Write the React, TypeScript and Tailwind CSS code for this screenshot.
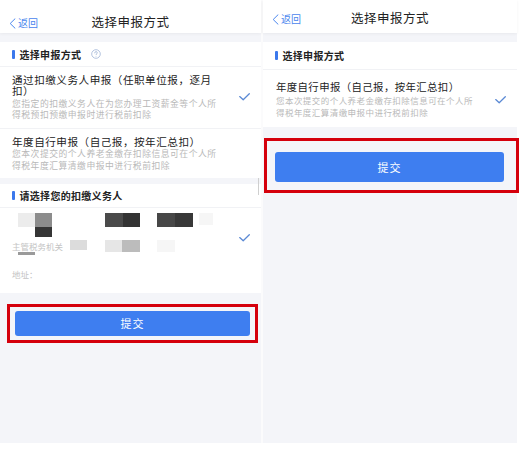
import React from 'react';

const FONT = { fontFamily: '"Noto Sans CJK SC", "Noto Sans", sans-serif' };

function Check() {
  return (
    <svg width="11" height="8" viewBox="0 0 11 8" fill="none">
      <polyline points="0.7,3.6 4.2,6.8 10.3,0.8" stroke="#5a89d4" strokeWidth="1.3" strokeLinecap="round" strokeLinejoin="round" />
    </svg>
  );
}

function HelpIcon() {
  return (
    <svg width="10" height="10" viewBox="0 0 10 10" fill="none">
      <circle cx="5" cy="5" r="4.3" stroke="#9fb4d6" strokeWidth="0.8" />
      <path d="M3.7 3.9a1.3 1.3 0 0 1 2.6 0c0 .8-1.3.9-1.3 1.7" stroke="#9fb4d6" strokeWidth="0.8" strokeLinecap="round" />
      <circle cx="5" cy="7.2" r="0.45" fill="#9fb4d6" />
    </svg>
  );
}

function Header({ pb }: { pb: string }) {
  return (
    <div className={`h-[33px] bg-white grid grid-cols-[1fr_auto_1fr] items-end px-[9px] shadow-[0_1px_3px_rgba(0,0,0,0.05)] ${pb}`}>
      <div className="flex items-center gap-[2px] text-[10px] leading-[14px] text-[#4a86ee]">
        <svg width="7" height="11" viewBox="0 0 7 11" fill="none">
          <polyline points="6,0.8 1.2,5.5 6,10.2" stroke="#4a86ee" strokeWidth="1" strokeLinecap="round" strokeLinejoin="round" />
        </svg>
        <span>返回</span>
      </div>
      <div className="text-[12.5px] leading-[16px] text-[#222] tracking-[0.5px]">选择申报方式</div>
      <div />
    </div>
  );
}

function SectionHead({ text, help, h }: { text: string; help?: boolean; h: string }) {
  return (
    <div className={`${h} flex items-center px-[12px] border-b border-[#f1f2f5]`}>
      <span className="w-[2.5px] h-[9px] bg-[#3b78ec] rounded-[1px] mr-[5px]" />
      <span className="text-[10px] font-bold text-[#222] tracking-[0.3px]">{text}</span>
      {help && (
        <span className="ml-[10px] flex">
          <HelpIcon />
        </span>
      )}
    </div>
  );
}

function Option({ title, desc, checked, last, size }: { title: string; desc: string; checked?: boolean; last?: boolean; size: 'l' | 'r' }) {
  const left = size === 'l';
  return (
    <div className={`flex items-center pr-[11px] ${left ? 'pl-[12px] pt-[7px] pb-[7px]' : 'pl-[13px] pt-[11px] pb-[9px]'} ${last ? '' : 'border-b border-[#f1f2f5]'}`}>
      <div className="w-[210px]">
        <div className={`${left ? 'text-[10.6px] tracking-[0.5px]' : 'text-[10.4px] tracking-[0.4px]'} leading-[11px] text-[#222]`}>{title}</div>
        <div
          className={`${left ? 'mt-[1.5px] w-[210px] text-[8.8px] tracking-[0.5px]' : 'mt-[3px] w-[200px] text-[8.5px] tracking-[0.45px]'} leading-[11.5px] text-[#b9b9b9]`}
        >
          {desc}
        </div>
      </div>
      <div className="ml-auto flex">{checked && <Check />}</div>
    </div>
  );
}

function Submit({ frame, btn }: { frame: string; btn: string }) {
  return (
    <div className={`border-[3px] border-[#d5000c] ${frame}`}>
      <div className={`${btn} bg-[#3e7ef0] rounded-[3px] flex items-center justify-center text-white text-[11px] tracking-[1px]`}>提交</div>
    </div>
  );
}

function LeftPanel() {
  return (
    <div className="w-[261px] h-[443px] bg-[#f4f5f9] flex flex-col relative">
      <Header pb="pb-[3px]" />
      <div className="h-[9px]" />
      <div className="bg-white">
        <SectionHead text="选择申报方式" help h="h-[25px]" />
        <Option
          size="l"
          title="通过扣缴义务人申报（任职单位报，逐月扣）"
          desc="您指定的扣缴义务人在为您办理工资薪金等个人所得税预扣预缴申报时进行税前扣除"
          checked
        />
        <Option
          size="l"
          title="年度自行申报（自己报，按年汇总扣）"
          desc="您本次提交的个人养老金缴存扣除信息可在个人所得税年度汇算清缴申报中进行税前扣除"
          last
        />
      </div>
      <div className="h-[6px]" />
      <div className="bg-white h-[109px] flex flex-col">
        <SectionHead text="请选择您的扣缴义务人" h="h-[24px]" />
        <div className="flex pl-[12px] pr-[11px] pt-[5px]">
          <div className="flex-1 flex flex-col">
            <div className="flex h-[24px]">
              <div className="w-[6px]" />
              <div className="flex flex-col">
                <div className="flex h-[14px]">
                  <div className="w-[17px] bg-[#ececec]" />
                  <div className="w-[17px] bg-[#8c8c8c]" />
                </div>
                <div className="flex h-[10px]">
                  <div className="w-[17px]" />
                  <div className="w-[17px] bg-[#353535]" />
                </div>
              </div>
              <div className="w-[53px]" />
              <div className="flex h-[14px]">
                <div className="w-[18px] bg-[#4a4a4a]" />
                <div className="w-[17px] bg-[#333]" />
              </div>
              <div className="w-[17px]" />
              <div className="flex h-[14px]">
                <div className="w-[18px] bg-[#474747]" />
                <div className="w-[18px] bg-[#383838]" />
              </div>
              <div className="ml-[6px] w-[14px] h-[12px] bg-[#f6f6f6]" />
            </div>
            <div className="flex items-start h-[16px] mt-[3px]">
              <div className="w-[58px]">
                <div className="text-[8.5px] leading-[12px] text-[#c4c4c4] whitespace-nowrap">主管税务机关</div>
                <div className="ml-[6px] w-[17px] h-[3px] bg-[#9a9a9a]" />
              </div>
              <div className="w-[17px] h-[10px] bg-[#dcdcdc]" />
              <div className="w-[18px]" />
              <div className="flex h-[12px]">
                <div className="w-[17px] bg-[#e6e6e6]" />
                <div className="w-[18px] bg-[#bcbcbc]" />
              </div>
              <div className="ml-[17px] w-[18px] h-[12px] bg-[#f6f6f6]" />
            </div>
            <div className="mt-[12px] text-[8.5px] leading-[12px] text-[#c4c4c4]">地址：</div>
          </div>
          <div className="flex items-center pb-[18px]">
            <Check />
          </div>
        </div>
      </div>
      <div className="px-[7px] pt-[11px]">
        <Submit frame="px-[5px] py-[4px] w-[251px]" btn="h-[25px]" />
      </div>
      <div className="absolute right-[2px] top-[178px] w-[1px] h-[17px] bg-[#cfcfcf]" />
    </div>
  );
}

function RightPanel() {
  return (
    <div className="w-[254px] h-[443px] bg-[#f4f5f9] flex flex-col">
      <Header pb="pb-[7px]" />
      <div className="h-[9px]" />
      <div className="bg-white">
        <SectionHead text="选择申报方式" h="h-[28px]" />
        <Option
          size="r"
          title="年度自行申报（自己报，按年汇总扣）"
          desc="您本次提交的个人养老金缴存扣除信息可在个人所得税年度汇算清缴申报中进行税前扣除"
          checked
          last
        />
      </div>
      <div className="pl-[1px] pt-[11px]">
        <Submit frame="pl-[8px] pr-[12px] pt-[11px] pb-[8px] w-[255px]" btn="h-[30px]" />
      </div>
    </div>
  );
}

export default function App() {
  return (
    <div className="w-[525px] h-[452px] bg-white flex items-start overflow-hidden" style={FONT}>
      <LeftPanel />
      <div className="w-[2px] h-[443px] bg-[#fbfbfc]" />
      <RightPanel />
    </div>
  );
}
